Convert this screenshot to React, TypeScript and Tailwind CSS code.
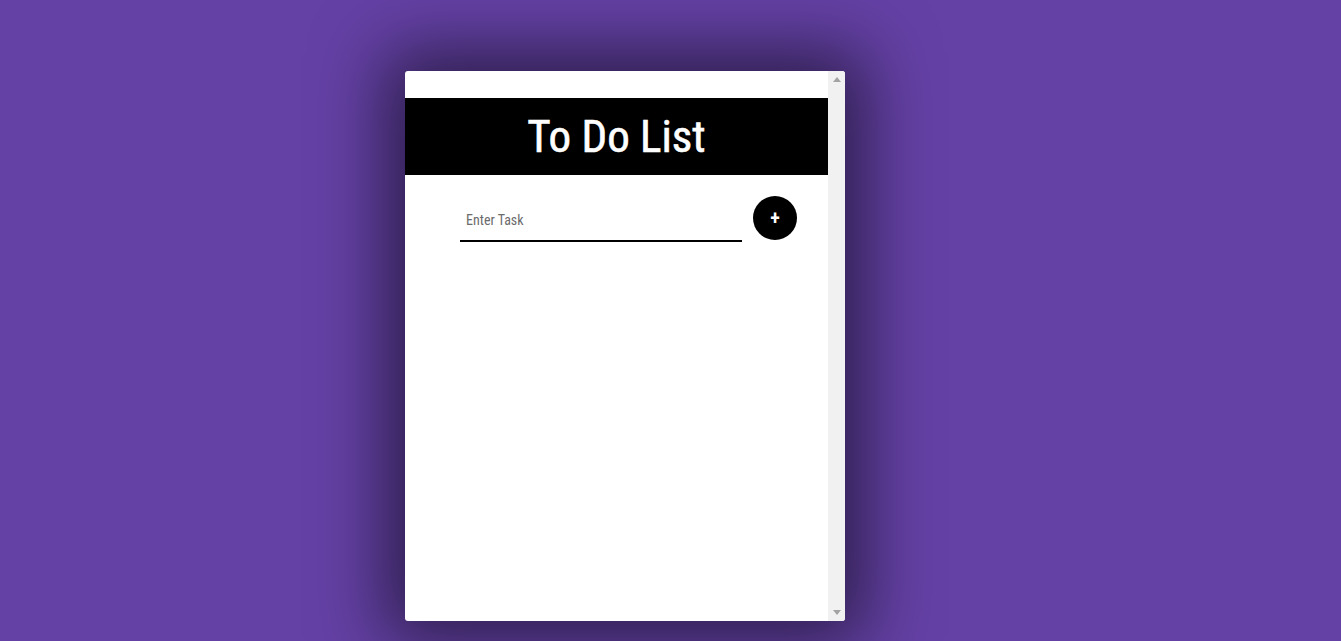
export default function App() {
  return (
    <div className="min-h-[641px] w-full bg-[#6441a5] pt-[71px] pl-[405px] font-['Roboto_Condensed','Liberation_Sans_Narrow','Arial_Narrow',sans-serif]">
      <div className="flex h-[550px] w-[440px] overflow-hidden rounded-[3px] bg-white shadow-[0_0_70px_20px_rgba(0,0,0,0.55)]">
        <div className="w-[423px]">
          <div className="pt-[27px]">
            <h1 className="flex h-[77px] items-center justify-center bg-black text-[45px] font-normal leading-none text-white [-webkit-text-stroke:0.6px_white]">
              To Do List
            </h1>
          </div>
          <div className="flex items-start pt-[21px] pl-[55px]">
            <input
              type="text"
              placeholder="Enter Task"
              className="mt-[3px] h-[43px] w-[282px] border-b-2 border-black px-[6px] text-[14px] text-gray-800 outline-none placeholder:text-[#6b6b6b]"
            />
            <button className="ml-[11px] flex h-[44px] w-[44px] items-center justify-center rounded-full bg-black text-[20px] font-semibold text-white">
              +
            </button>
          </div>
        </div>
        <div className="flex w-[17px] flex-col items-center justify-between bg-[#f1f1f1] py-[6px]">
          <svg width="8" height="5" viewBox="0 0 8 5">
            <path d="M4 0 L8 5 L0 5 Z" fill="#a3a3a3" />
          </svg>
          <svg width="8" height="5" viewBox="0 0 8 5">
            <path d="M0 0 L8 0 L4 5 Z" fill="#a3a3a3" />
          </svg>
        </div>
      </div>
    </div>
  )
}
